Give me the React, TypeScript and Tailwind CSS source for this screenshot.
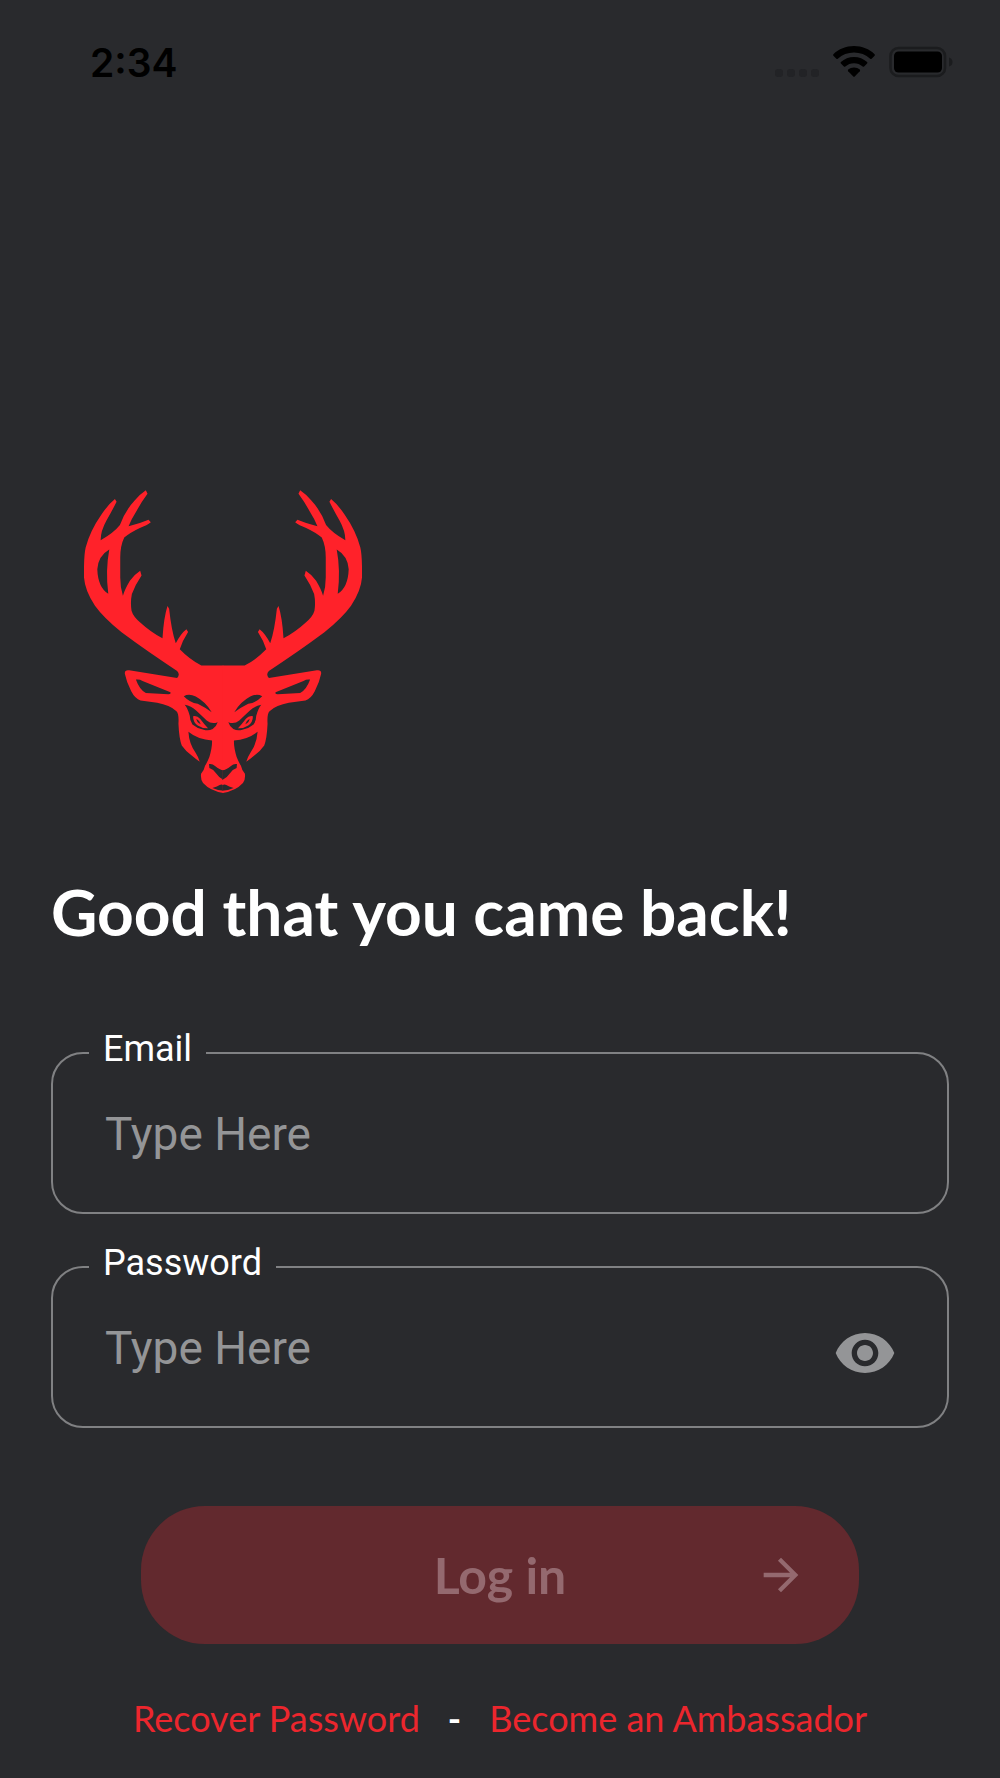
import { useState } from "react";
import { MdArrowForward, MdVisibility } from "react-icons/md";

function StatusBar() {
  return (
    <header className="flex items-center justify-between pl-[90px] pr-[47px] pt-[37px] text-black">
      <span className="pt-[2px] font-['Inter',sans-serif] text-[39px] leading-[48px] font-semibold">2:34</span>
      <div className="flex items-center gap-[14px]">
        <div className="flex gap-1 pt-[22px]">
          <span className="size-2 rounded-[3px] bg-[#222326]" />
          <span className="size-2 rounded-[3px] bg-[#222326]" />
          <span className="size-2 rounded-[3px] bg-[#222326]" />
          <span className="size-2 rounded-[3px] bg-[#222326]" />
        </div>
        <svg viewBox="0 0 42 32" className="w-[42px] h-8" fill="currentColor" aria-hidden="true">
          <path d="M21 0C29 0 36.300 3 41.600 8.200Q42.200 9 41.600 9.700L38.600 12.700Q37.900 13.300 37.200 12.700C32.800 8.600 27.100 6.400 21 6.400S9.200 8.600 4.800 12.700Q4.100 13.300 3.400 12.700L.4 9.700Q-.2 9 .4 8.200C5.700 3 13 0 21 0Z" />
          <path d="M21 11C26 11 30.600 12.900 34.100 16.100Q34.800 16.800 34.100 17.500L31.100 20.500Q30.400 21.100 29.700 20.500C27.300 18.400 24.300 17.200 21 17.200S14.700 18.400 12.300 20.500Q11.600 21.100 10.900 20.500L7.900 17.500Q7.200 16.800 7.900 16.100C11.400 12.900 16 11 21 11Z" />
          <path d="M21 21.500C23.300 21.500 25.200 22.300 26.800 23.600Q27.500 24.400 26.800 25.200L21.700 30.600Q21 31.300 20.300 30.600L15.200 25.200Q14.500 24.400 15.200 23.600C16.800 22.300 18.700 21.500 21 21.500Z" />
        </svg>
        <svg viewBox="0 0 64 32" className="w-16 h-8" aria-hidden="true">
          <rect x="1.500" y="2" width="54.500" height="28" rx="8" fill="none" stroke="#1b1c1e" strokeWidth="2.600" />
          <rect x="5" y="5.500" width="48" height="21" rx="4.500" fill="currentColor" />
          <path d="M60 11.500Q63.500 12.500 63.500 16T60 20.500Z" fill="#1b1c1e" />
        </svg>
      </div>
    </header>
  );
}

// One half of the head, the other is the same thing mirrored on x = 460
function StagHalf() {
  return (
    <>
      <path
        fill="#ff222a"
        d="M461 555H395Q360 537 330 506Q338 480 355 454L350 446Q334 458 318 488Q305 450 298 384L293 376Q282 410 278 473Q240 452 212 426Q190 408 185 390Q181 365 186 340Q196 312 215 284L211 270Q195 280 180 300Q165 325 159 345Q151 320 151 290V230Q151 195 163 170Q180 155 210 141Q232 133 243 124L236 116Q210 127 176 136Q184 115 200 90Q215 62 233 38L228 28Q210 40 195 58Q165 90 150 132Q132 155 92 178Q92 150 110 118Q126 90 140 62L135 54Q115 70 95 100Q60 150 47 200Q41 225 42 290Q45 330 75 375Q100 410 155 455Q240 518 322 571Q332 582 322 592L178 569Q163 567 165 580Q170 605 184 632Q196 655 212 660L262 667Q300 674 320 692Q328 700 326 730Q328 775 336 795Q348 812 364 824Q378 836 390 844Q387 832 378 818Q358 790 356 754Q385 778 427 780Q428 800 419 830Q413 845 406 856Q404 868 394 880Q392 898 400 908Q422 932 461 938Z"
      />
      <g fill="#292a2d">
        <path d="M118 206Q85 225 82 265Q84 320 115 339Q106 270 118 206Z" />
        <g transform="translate(120 480)">
          <path d="M78 117Q88 115 98 121L182 155Q184 161 176 161L108 157Q90 150 78 117Z" />
          <path d="M222 167Q238 158 258 168Q288 184 306 215Q288 202 264 190Q240 186 222 167Z" />
          <path d="M225 193Q244 196 260 211Q278 228 291 240Q306 252 324 245Q320 258 309 266Q296 272 282 268Q262 264 248 252Q240 240 240 226Q234 204 225 193Z" />
          <path d="M298 371Q308 369 316 377Q330 389 342 390V419Q328 413 319 399Q312 387 299 383Z" />
          <path d="M308 443Q324 438 330 434Q336 430 342 435V451Q325 451 308 443Z" />
        </g>
      </g>
      <path fill="#ff222a" d="M370 707Q382 704 391 715Q402 730 415 743Q397 744 384 735Q370 725 370 707Z" />
      <path fill="#292a2d" d="M380 715Q390 721 393 731Q382 728 380 715Z" />
    </>
  );
}

function StagLogo() {
  return (
    <svg viewBox="42 28 836 912" className="ml-[33px] w-[278px] h-[304px]" role="img" aria-label="Stag">
      <StagHalf />
      <g transform="translate(920 0) scale(-1 1)">
        <StagHalf />
      </g>
    </svg>
  );
}

interface FieldProps {
  id: string;
  label: string;
  type: string;
  children?: React.ReactNode;
}

function Field({ id, label, type, children }: FieldProps) {
  return (
    <fieldset className="min-w-0 rounded-[32px] border-2 border-[#808183] px-9 pb-5 font-['Roboto',sans-serif]">
      <legend className="px-[14px] pb-2 text-[36px] leading-[36px] text-white">
        <label htmlFor={id}>{label}</label>
      </legend>
      <div className="flex items-center">
        <input
          id={id}
          type={type}
          placeholder="Type Here"
          className="h-[117px] min-w-0 flex-1 bg-transparent pl-4 text-[46px] text-white outline-none placeholder:text-[#949597]"
        />
        {children}
      </div>
    </fieldset>
  );
}

export default function App() {
  const [visible, setVisible] = useState(false);

  return (
    <div className="flex min-h-screen flex-col bg-[#292a2d] font-['Lato',sans-serif]">
      <StatusBar />
      <main className="flex flex-1 flex-col justify-end px-[51px] pb-9">
        <StagLogo />
        <h1 className="mt-[78px] text-[64px] leading-[80px] font-bold text-white">Good that you came back!</h1>
        <form className="mt-[79px] flex flex-col" onSubmit={(e) => e.preventDefault()}>
          <div className="flex flex-col gap-[31px]">
            <Field id="email" label="Email" type="email" />
            <Field id="password" label="Password" type={visible ? "text" : "password"}>
              <button
                type="button"
                aria-label="Show password"
                onClick={() => setVisible(!visible)}
                className="mr-[14px] pt-[10px] text-[#949597]"
              >
                <MdVisibility size={64} />
              </button>
            </Field>
          </div>
          <button
            type="submit"
            disabled
            className="relative mx-auto mt-[78px] h-[138px] w-4/5 rounded-[64px] bg-[#62292e] text-[50px] font-bold text-[#94696f]"
          >
            Log in
            <MdArrowForward size={52} className="absolute right-[52px] top-[43px]" />
          </button>
        </form>
        <nav className="mt-[50px] flex justify-center gap-7 text-[36px] leading-[48px] text-[#ec262d]">
          <a href="#recover">Recover Password</a>
          <span className="font-bold text-white">-</span>
          <a href="#ambassador">Become an Ambassador</a>
        </nav>
      </main>
    </div>
  );
}
